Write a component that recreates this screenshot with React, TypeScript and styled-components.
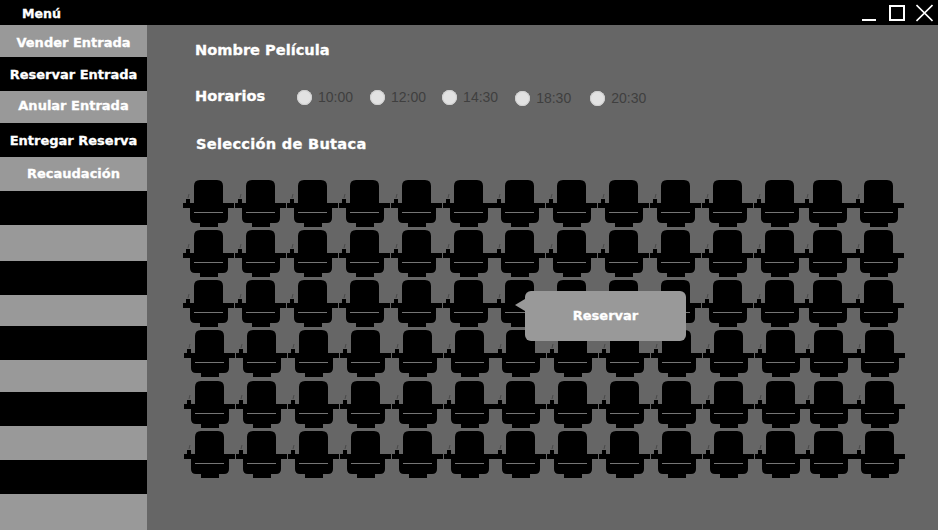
import React from "react";
import styled, { createGlobalStyle } from "styled-components";

const Global = createGlobalStyle`
  html, body { margin: 0; padding: 0; width: 938px; height: 530px; overflow: hidden; }
  body { font-family: "Liberation Sans", Arial, sans-serif; }
`;

const Shell = styled.div`
  width: 938px;
  height: 530px;
  display: grid;
  grid-template-columns: 147px 1fr;
  grid-template-rows: 25px 1fr;
  background: #666666;
`;

const TitleBar = styled.header`
  grid-column: 1 / 3;
  background: #000;
  display: flex;
  align-items: center;
  justify-content: space-between;
  padding: 0 5px 0 22px;
`;

const Heavy = styled.span`
  font-family: "DejaVu Sans", Verdana, sans-serif;
  font-weight: 700;
  color: #fff;
  -webkit-text-stroke: 0.3px #fff;
  white-space: nowrap;
`;

const MenuTitle = styled(Heavy)`
  font-size: 12.6px;
  padding-top: 1px;
`;

const WindowControls = styled.div`
  display: flex;
  align-items: center;
  gap: 11px;
  margin-top: 1px;
`;

const Sidebar = styled.nav`
  display: flex;
  flex-direction: column;
`;

const MenuItem = styled.div<{ $h: number; $dark: boolean; $shift: number }>`
  height: ${(p) => p.$h}px;
  background: ${(p) => (p.$dark ? "#000" : "#999999")};
  display: flex;
  align-items: center;
  justify-content: center;
  padding-top: ${(p) => Math.max(p.$shift, 0)}px;
  padding-bottom: ${(p) => Math.max(-p.$shift, 0)}px;
  box-sizing: border-box;
`;

const MenuLabel = styled(Heavy)`
  font-size: 13px;
`;

const Main = styled.main`
  display: flex;
  flex-direction: column;
  padding: 16px 0 0 48px;
`;

const SectionTitle = styled(Heavy)`
  font-size: 14.6px;
  line-height: 18px;
`;

const Schedule = styled.div`
  display: flex;
  align-items: center;
  margin-top: 29px;
  height: 18px;
`;

const ScheduleLabel = styled(SectionTitle)`
  width: 102px;
  margin-top: -2px;
`;

const Times = styled.div`
  display: flex;
`;

const TimeOption = styled.label<{ $gap: number; $drop: number }>`
  display: flex;
  align-items: center;
  gap: 6px;
  margin-left: ${(p) => p.$gap}px;
  margin-top: ${(p) => p.$drop}px;
  font-size: 14px;
  color: #3f3f3f;
`;

const Radio = styled.span`
  width: 15px;
  height: 15px;
  border-radius: 50%;
  background: #e2e2e2;
  box-shadow: inset 0 0 0 1px #cfcfcf;
`;

const SeatTitle = styled(SectionTitle)`
  margin: 29px 0 0 1px;
  letter-spacing: 0.27px;
`;

const SeatGrid = styled.div`
  display: flex;
  flex-direction: column;
  position: relative;
  margin: 27px 0 0 -12px;
`;

const SeatRow = styled.div<{ $top: number; $left: number }>`
  display: flex;
  height: 47px;
  margin-top: ${(p) => p.$top}px;
  margin-left: ${(p) => p.$left}px;
`;

const SeatBox = styled.svg<{ $nudge: number }>`
  width: 52px;
  height: 47px;
  flex: none;
  margin-left: ${(p) => p.$nudge}px;
`;

const Popover = styled.div`
  position: absolute;
  left: 342px;
  top: 111px;
  width: 161px;
  height: 50px;
  border-radius: 6px;
  background: #999999;
  display: flex;
  align-items: center;
  justify-content: center;
  padding-bottom: 2px;
  box-sizing: border-box;
  &::before {
    content: "";
    position: absolute;
    left: -10px;
    top: 8px;
    border-style: solid;
    border-width: 6px 10px 6px 0;
    border-color: transparent #999999 transparent transparent;
  }
`;

const PopoverLabel = styled(Heavy)`
  font-size: 13px;
`;

const Seat = ({ nudge }: { nudge: number }) => (
  <SeatBox $nudge={nudge} viewBox="0 0 52 47">
    <path
      fill="#000"
      d="M17 0h17q6 0 6 6v17h11v5h-6v10q0 5-5 5h-5v4H17v-4h-5q-5 0-5-5V28H0v-5h3v-4h4v4h4V6q0-6 6-6z"
    />
    <rect x="11" y="32" width="29" height="1" fill="#757575" />
    <path d="M6 14l-1 4" stroke="#4a4a4a" strokeWidth="1" fill="none" />
  </SeatBox>
);

const bands = [32, 34, 32, 34, 34, 34, 36, 34, 31, 34, 32, 34, 34, 34, 36];
const labels = [
  { text: "Vender Entrada", shift: 2 },
  { text: "Reservar Entrada", shift: 0 },
  { text: "Anular Entrada", shift: -3 },
  { text: "Entregar Reserva", shift: 0 },
  { text: "Recaudación", shift: -2 },
];
const times = [
  { t: "10:00", gap: 0, drop: 0 },
  { t: "12:00", gap: 17, drop: 0 },
  { t: "14:30", gap: 16, drop: 0 },
  { t: "18:30", gap: 17, drop: 2 },
  { t: "20:30", gap: 19, drop: 2 },
];
const rows = [
  { top: 0, left: 0 },
  { top: 3, left: 0 },
  { top: 3, left: 0 },
  { top: 3, left: 1 },
  { top: 4, left: 1 },
  { top: 3, left: 1 },
];
const nudges = [0, 0, 0, 0, 0, 0, -1, 0, 0, 0, 0, 0, -4, -1];

export default function App() {
  return (
    <Shell>
      <Global />
      <TitleBar>
        <MenuTitle>Menú</MenuTitle>
        <WindowControls>
          <svg width="16" height="20" viewBox="0 0 16 20">
            <rect x="0" y="16" width="14" height="2" fill="#fff" />
          </svg>
          <svg width="16" height="16" viewBox="0 0 16 16">
            <rect x="1" y="1" width="14" height="14" fill="none" stroke="#fff" strokeWidth="2" />
          </svg>
          <svg width="17" height="18" viewBox="0 0 17 18">
            <path d="M0.5 1l16 16M16.5 1l-16 16" stroke="#fff" strokeWidth="1.6" />
          </svg>
        </WindowControls>
      </TitleBar>
      <Sidebar>
        {bands.map((h, i) => (
          <MenuItem key={i} $h={h} $dark={i % 2 === 1} $shift={labels[i]?.shift ?? 0}>
            {labels[i] && <MenuLabel>{labels[i].text}</MenuLabel>}
          </MenuItem>
        ))}
      </Sidebar>
      <Main>
        <SectionTitle>Nombre Película</SectionTitle>
        <Schedule>
          <ScheduleLabel>Horarios</ScheduleLabel>
          <Times>
            {times.map(({ t, gap, drop }) => (
              <TimeOption key={t} $gap={gap} $drop={drop}>
                <Radio />
                {t}
              </TimeOption>
            ))}
          </Times>
        </Schedule>
        <SeatTitle>Selección de Butaca</SeatTitle>
        <SeatGrid>
          {rows.map((row, r) => (
            <SeatRow key={r} $top={row.top} $left={row.left}>
              {nudges.map((n, c) => (
                <Seat key={c} nudge={n} />
              ))}
            </SeatRow>
          ))}
          <Popover>
            <PopoverLabel>Reservar</PopoverLabel>
          </Popover>
        </SeatGrid>
      </Main>
    </Shell>
  );
}
